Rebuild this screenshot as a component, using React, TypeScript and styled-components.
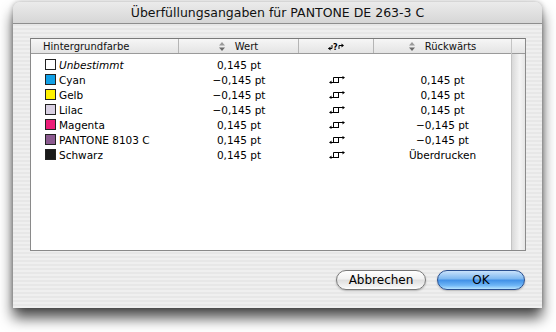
import React from "react";
import styled, { createGlobalStyle } from "styled-components";

const Global = createGlobalStyle`
  html, body { margin: 0; padding: 0; background: #ffffff; }
  body { font-family: "DejaVu Sans", "Liberation Sans", sans-serif; }
`;

const Page = styled.div`
  width: 556px;
  height: 332px;
  padding: 2px 14px 0 13px;
  box-sizing: border-box;
`;

const Window = styled.div`
  width: 529px;
  height: 306px;
  border-radius: 7px 7px 0 0;
  background-color: #ececec;
  background-image: repeating-linear-gradient(
    to bottom,
    #efefef 0px,
    #efefef 2px,
    #e7e7e7 2px,
    #e7e7e7 4px
  );
  box-shadow: 0 10px 14px rgba(0, 0, 0, 0.7), 0 0 5px rgba(0, 0, 0, 0.3);
  display: flex;
  flex-direction: column;
  overflow: hidden;
`;

const TitleBar = styled.div`
  height: 21px;
  border-bottom: 1px solid #8e8e8e;
  background: linear-gradient(to bottom, #ebebeb, #d6d6d6);
  display: flex;
  align-items: center;
  justify-content: center;
  font-size: 12.5px;
  color: #111;
`;

const Body = styled.div`
  flex: 1;
  padding: 14px 16px 0 17px;
  display: flex;
  flex-direction: column;
`;

const TableFrame = styled.div`
  height: 213px;
  border: 1px solid #8a8a8a;
  border-top-color: #7a7a7a;
  box-sizing: border-box;
  background: #fff;
  display: flex;
`;

const TableMain = styled.div`
  flex: 1;
  display: flex;
  flex-direction: column;
`;

const Grid = `
  display: grid;
  grid-template-columns: 148px 120px 75px 137px;
`;

const HeaderRow = styled.div`
  ${Grid}
  height: 14px;
  border-bottom: 1px solid #9a9a9a;
  background: linear-gradient(to bottom, #f6f6f6, #e4e4e4);
  font-size: 10px;
  color: #111;
`;

const HeaderCell = styled.div<{ $align?: string; $last?: boolean }>`
  display: flex;
  align-items: center;
  justify-content: ${(p) => p.$align ?? "center"};
  padding-left: ${(p) => (p.$align === "flex-start" ? "12px" : "0")};
  border-right: ${(p) => (p.$last ? "none" : "1px solid #b5b5b5")};
  gap: 10px;
`;

const Rows = styled.div`
  padding-top: 3px;
  display: flex;
  flex-direction: column;
`;

const Row = styled.div`
  ${Grid}
  height: 15px;
  font-size: 10.5px;
  color: #000;
`;

const NameCell = styled.div<{ $italic?: boolean }>`
  display: flex;
  align-items: center;
  padding-left: 14px;
  gap: 3px;
  font-style: ${(p) => (p.$italic ? "italic" : "normal")};
`;

const Swatch = styled.span<{ $color: string }>`
  width: 9px;
  height: 9px;
  border: 1px solid #222;
  background: ${(p) => p.$color};
  flex: none;
`;

const Cell = styled.div`
  display: flex;
  align-items: center;
  justify-content: center;
`;

const ScrollTrack = styled.div`
  width: 14px;
  border-left: 1px solid #c4c4c4;
  display: flex;
  flex-direction: column;
  background: linear-gradient(to right, #d9d9d9, #f4f4f4 60%, #e6e6e6);
`;

const ScrollHead = styled.div`
  height: 14px;
  border-bottom: 1px solid #9a9a9a;
  background: linear-gradient(to bottom, #f6f6f6, #e4e4e4);
`;

const ButtonBar = styled.div`
  display: flex;
  justify-content: flex-end;
  gap: 11px;
  padding-top: 19px;
  padding-right: 1px;
`;

const Button = styled.button<{ $primary?: boolean }>`
  height: 20px;
  width: ${(p) => (p.$primary ? "88px" : "90px")};
  border-radius: 10px;
  font-family: "DejaVu Sans", "Liberation Sans", sans-serif;
  font-size: 12px;
  color: #000;
  padding: 0;
  border: 1px solid ${(p) => (p.$primary ? "#2a4f8f" : "#7a7a7a")};
  background: ${(p) =>
    p.$primary
      ? "linear-gradient(to bottom, #c9e2fb 0%, #7cb7f0 45%, #3f8fe6 50%, #6fb6f6 80%, #b7e4ff 100%)"
      : "linear-gradient(to bottom, #ffffff 0%, #f1f1f1 45%, #dedede 50%, #f2f2f2 85%, #ffffff 100%)"};
  box-shadow: 0 1px 2px rgba(0, 0, 0, 0.25);
`;

const SortIcon = () => (
  <svg width="6" height="9" viewBox="0 0 6 9">
    <path d="M3 0 L6 3.5 L0 3.5 Z" fill="#9a9a9a" />
    <path d="M3 9 L6 5.5 L0 5.5 Z" fill="#6a6a6a" />
  </svg>
);

const SwapIcon = () => (
  <svg width="16" height="8" viewBox="0 0 16 8">
    <path d="M1 6.5 H10 M4.5 6.5 V1.5 H14 M9.5 1.5 V6.5" stroke="#000" strokeWidth="1" fill="none" />
    <path d="M0 6.5 L2.5 4.5 V8 Z" fill="#000" />
    <path d="M16 1.5 L13.5 0 V3.5 Z" fill="#000" />
  </svg>
);

const HeaderSwapIcon = () => (
  <svg width="16" height="9" viewBox="0 0 16 9">
    <path d="M0.5 6.5 H4 V3" stroke="#000" strokeWidth="1" fill="none" />
    <path d="M0 6.5 L2.5 4.5 V8.5 Z" fill="#000" />
    <text x="5" y="7.5" fontSize="8" fontWeight="bold" fontFamily="DejaVu Sans, sans-serif" fill="#000">?</text>
    <path d="M11 7 V3.5 H14" stroke="#000" strokeWidth="1" fill="none" />
    <path d="M16 3.5 L13.5 1.5 V5.5 Z" fill="#000" />
  </svg>
);

type Item = { name: string; color: string; wert: string; rueck?: string; italic?: boolean };

const items: Item[] = [
  { name: "Unbestimmt", color: "#ffffff", wert: "0,145 pt", italic: true },
  { name: "Cyan", color: "#11a0e6", wert: "\u22120,145 pt", rueck: "0,145 pt" },
  { name: "Gelb", color: "#fff200", wert: "\u22120,145 pt", rueck: "0,145 pt" },
  { name: "Lilac", color: "#d9d0e3", wert: "\u22120,145 pt", rueck: "0,145 pt" },
  { name: "Magenta", color: "#ec1e79", wert: "0,145 pt", rueck: "\u22120,145 pt" },
  { name: "PANTONE 8103 C", color: "#8b5a8f", wert: "0,145 pt", rueck: "\u22120,145 pt" },
  { name: "Schwarz", color: "#1a1a1a", wert: "0,145 pt", rueck: "Überdrucken" },
];

export default function App() {
  return (
    <Page>
      <Global />
      <Window>
        <TitleBar>Überfüllungsangaben für PANTONE DE 263-3 C</TitleBar>
        <Body>
          <TableFrame>
            <TableMain>
              <HeaderRow>
                <HeaderCell $align="flex-start">Hintergrundfarbe</HeaderCell>
                <HeaderCell>
                  <SortIcon />
                  Wert
                </HeaderCell>
                <HeaderCell>
                  <HeaderSwapIcon />
                </HeaderCell>
                <HeaderCell $last>
                  <SortIcon />
                  Rückwärts
                </HeaderCell>
              </HeaderRow>
              <Rows>
                {items.map((it) => (
                  <Row key={it.name}>
                    <NameCell $italic={it.italic}>
                      <Swatch $color={it.color} />
                      {it.name}
                    </NameCell>
                    <Cell>{it.wert}</Cell>
                    <Cell>{it.rueck ? <SwapIcon /> : null}</Cell>
                    <Cell>{it.rueck ?? ""}</Cell>
                  </Row>
                ))}
              </Rows>
            </TableMain>
            <ScrollTrack>
              <ScrollHead />
            </ScrollTrack>
          </TableFrame>
          <ButtonBar>
            <Button>Abbrechen</Button>
            <Button $primary>OK</Button>
          </ButtonBar>
        </Body>
      </Window>
    </Page>
  );
}
